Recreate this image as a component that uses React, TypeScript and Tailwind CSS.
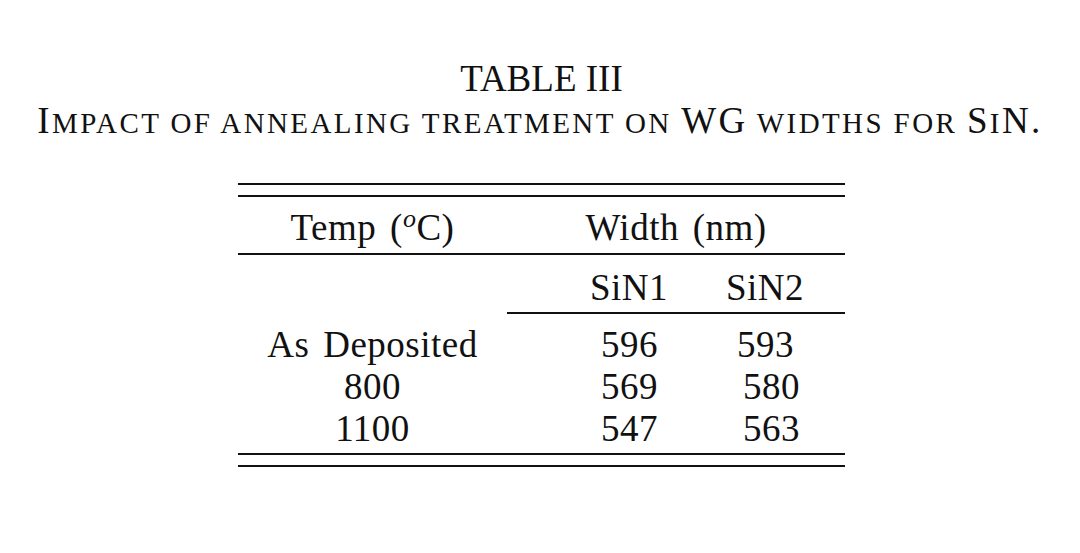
export default function App() {
  const rows = [
    { t: "As Deposited", a: "596", b: "593", bp: "pl-[22px]" },
    { t: "800", a: "569", b: "580", bp: "pl-[28px]" },
    { t: "1100", a: "547", b: "563", bp: "pl-[28px]" },
  ];

  return (
    <div
      className="w-[1080px] h-[553px] bg-white text-[#111] overflow-hidden"
      style={{ fontFamily: '"Liberation Serif", "Times New Roman", serif' }}
    >
      {/* caption */}
      <div className="pt-[60px] text-center text-[37px] leading-[37px] pl-[3px]">TABLE III</div>
      <div className="pt-[5px] text-center text-[37px] leading-[37px] tracking-[2.4px]">
        I<span className="text-[29px]">MPACT OF ANNEALING TREATMENT ON </span>WG
        <span className="text-[29px]"> WIDTHS FOR </span>S<span className="text-[29px]">I</span>N.
      </div>

      {/* table */}
      <div className="flex justify-center pl-[3px] pt-[41px]">
        <div className="w-[607px] text-[37px] tracking-[0.5px] [word-spacing:4px]">
          <div className="h-[2px] bg-[#111]" />
          <div className="h-[10px]" />
          <div className="h-[2px] bg-[#111]" />

          <div className="flex pt-[12px] pb-[7px] leading-[37px]">
            <div className="w-[269px] text-center">
              Temp (<sup className="italic text-[26px]">o</sup>C)
            </div>
            <div className="flex-1 text-center">Width (nm)</div>
          </div>
          <div className="h-[2px] bg-[#111]" />

          <div className="flex pt-[14px] pb-[6px] leading-[37px]">
            <div className="w-[269px]" />
            <div className="w-[208px] pl-[83px]">SiN1</div>
            <div className="flex-1 pl-[11px]">SiN2</div>
          </div>
          <div className="flex">
            <div className="w-[269px]" />
            <div className="flex-1 h-[2px] bg-[#111]" />
          </div>

          <div className="pt-[10px] pb-[3px] leading-[42px]">
            {rows.map((r) => (
              <div key={r.t} className="flex">
                <div className="w-[269px] text-center">{r.t}</div>
                <div className="w-[208px] pl-[94px]">{r.a}</div>
                <div className={`flex-1 ${r.bp}`}>{r.b}</div>
              </div>
            ))}
          </div>

          <div className="h-[2px] bg-[#111]" />
          <div className="h-[10px]" />
          <div className="h-[2px] bg-[#111]" />
        </div>
      </div>
    </div>
  );
}
